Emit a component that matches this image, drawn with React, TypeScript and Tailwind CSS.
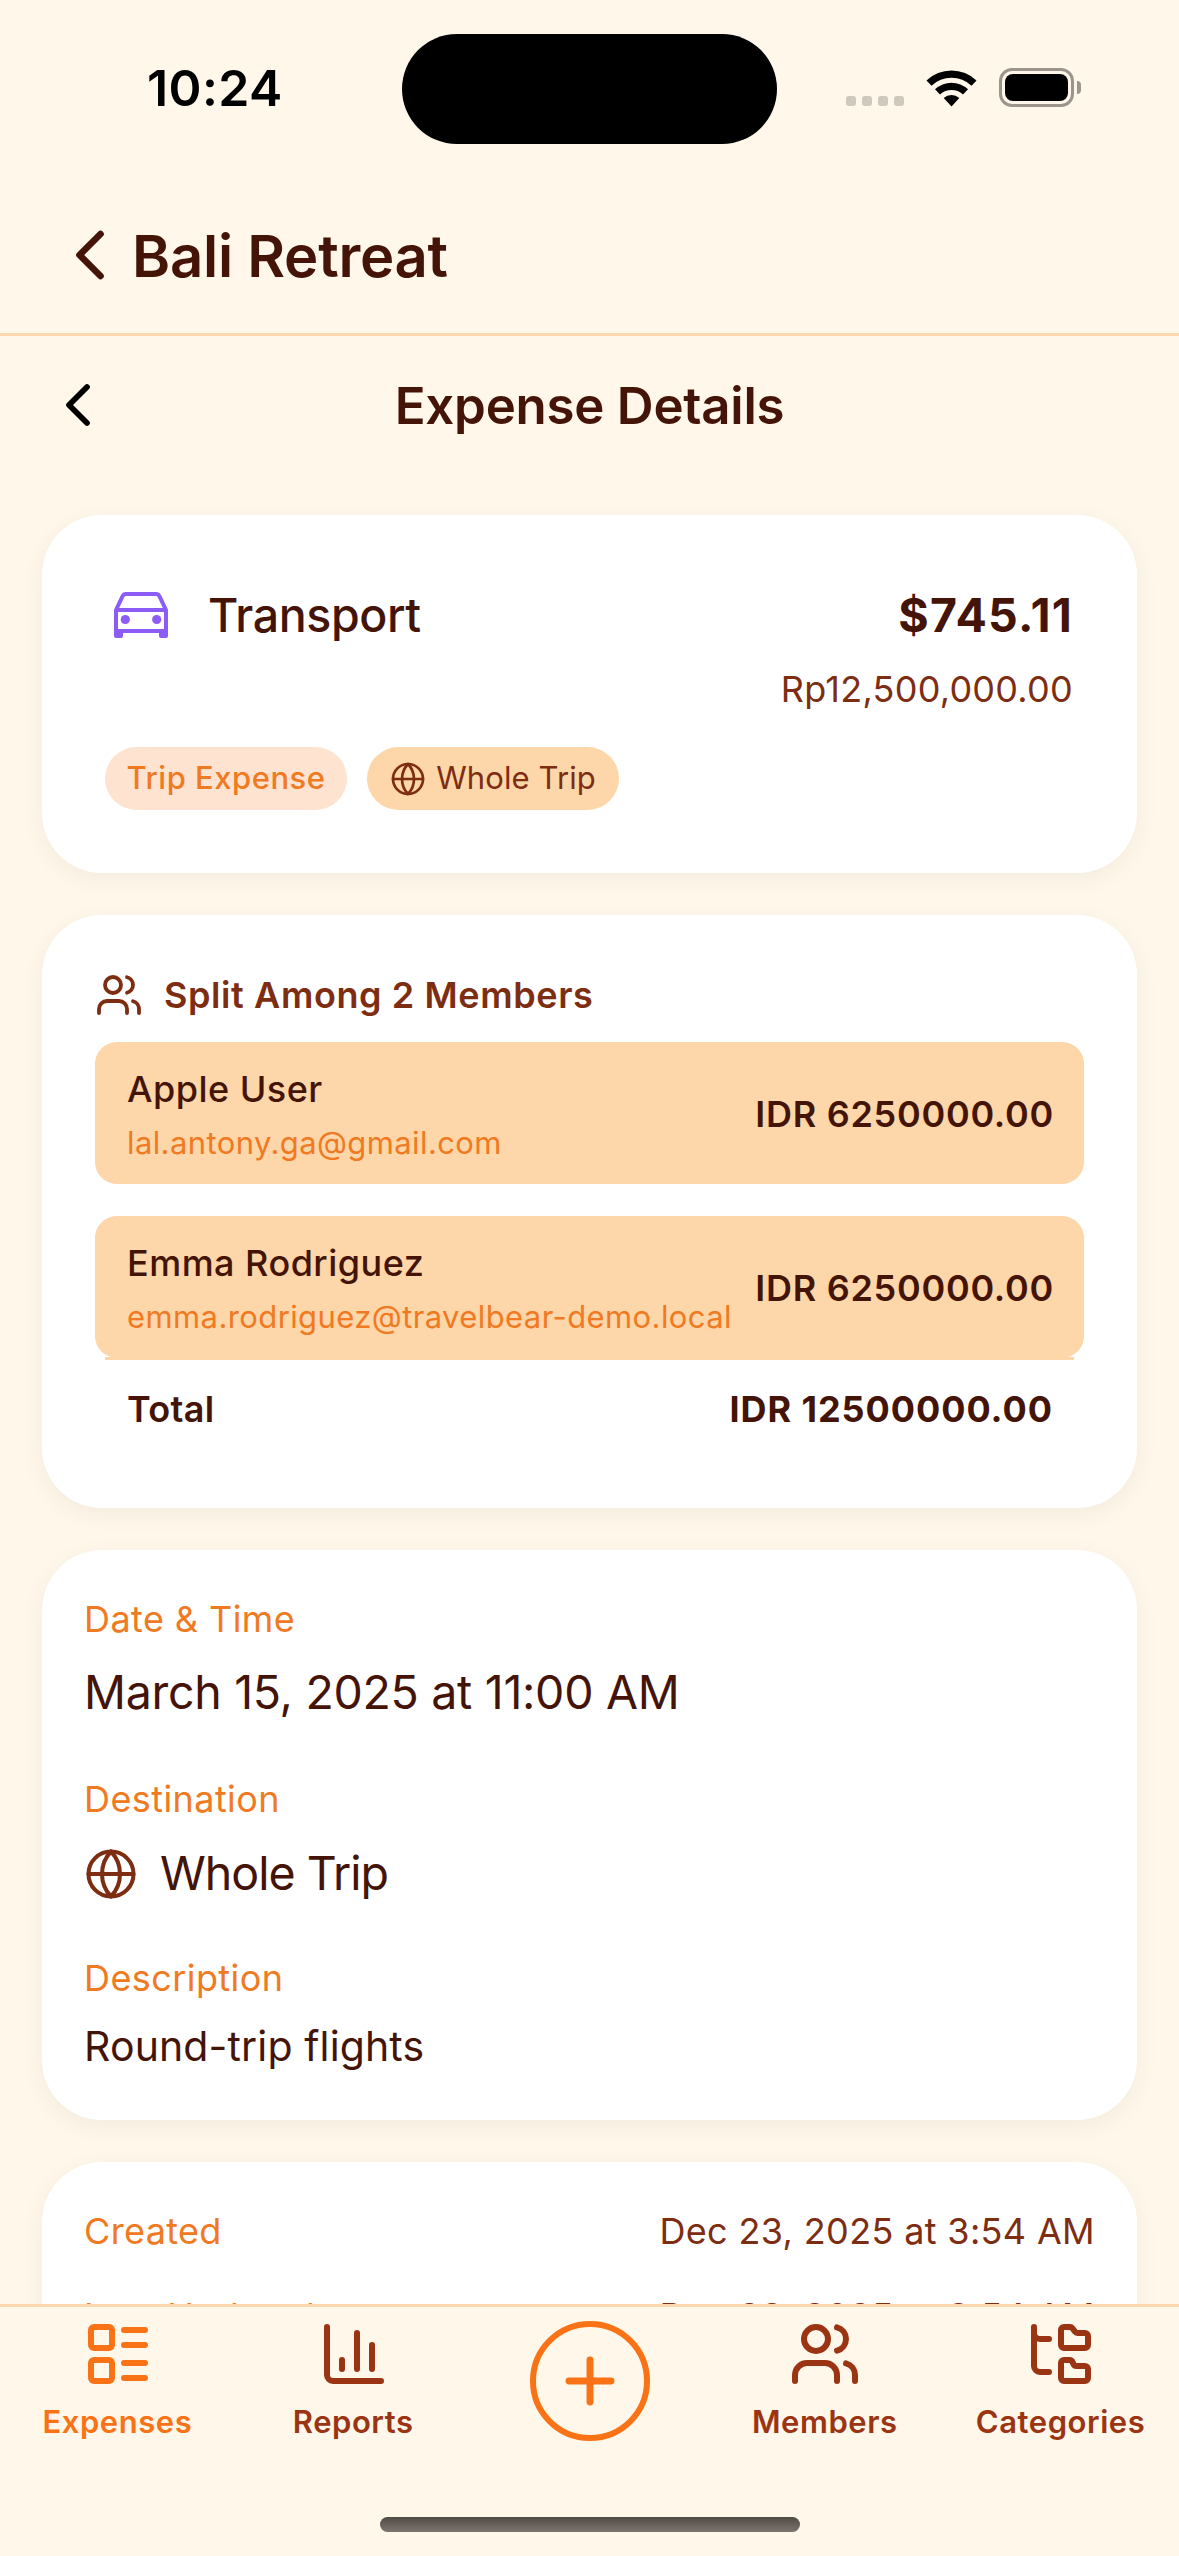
import type { ReactNode } from 'react'
import { ChevronLeft, ChartColumn, FolderTree, Globe, LayoutList, Plus, Users } from 'lucide-react'
import type { LucideIcon } from 'lucide-react'
import clsx from 'clsx'

const members = [
  { name: 'Apple User', email: 'lal.antony.ga@gmail.com', share: 'IDR 6250000.00' },
  { name: 'Emma Rodriguez', email: 'emma.rodriguez@travelbear-demo.local', share: 'IDR 6250000.00' },
]

const history = [
  { label: 'Created', value: 'Dec 23, 2025 at 3:54 AM' },
  { label: 'Last Updated', value: 'Dec 23, 2025 at 3:54 AM' },
]

export default function App() {
  return (
    <div className="w-[1179px] h-[2556px] flex flex-col overflow-hidden bg-[#fef7ea] text-[#431407] font-['Inter',sans-serif]">
      <StatusBar />

      <header className="h-[159px] shrink-0 flex items-center pl-[48px] border-b-3 border-[#fad7ad]">
        <ChevronLeft size={84} strokeWidth={1.9} />
        <h1 className="pt-[2px] text-[58px] font-semibold tracking-[-0.25px]">Bali Retreat</h1>
      </header>

      <div className="h-[138px] shrink-0 grid grid-cols-[1fr_auto_1fr] items-center px-[42px]">
        <ChevronLeft size={72} strokeWidth={1.9} className="text-black" />
        <h2 className="pt-[2px] text-[51px] font-semibold tracking-[-0.25px]">Expense Details</h2>
      </div>

      <main className="flex-1 min-h-0 overflow-hidden flex flex-col gap-[42px] px-[42px] pt-[41px]">
        {/* Summary */}
        <Card className="h-[358px] px-[63px] pt-[70px]">
          <div className="h-[60px] flex items-center text-[46.5px]">
            <CarIcon />
            <span className="ml-[40px] pt-[2px] font-medium tracking-[-0.4px]">Transport</span>
            <span className="ml-auto mr-px pt-[2px] font-bold tracking-[1.2px]">$745.11</span>
          </div>
          <p className="mt-[20px] pr-px text-right text-[36px] leading-[48px] tracking-[0.25px] text-[#7c2d12]">Rp12,500,000.00</p>
          <div className="mt-[34px] flex gap-[20px] text-[31px]">
            <span className="w-[242px] h-[63px] rounded-full bg-[#fee3d0] text-[#f07a22] font-medium tracking-[0.5px] flex items-center justify-center">
              Trip Expense
            </span>
            <span className="w-[252px] h-[63px] rounded-full bg-[#fdd6a9] text-[#7c2d12] tracking-[0.1px] flex items-center justify-center gap-[10px]">
              <Globe size={36} strokeWidth={1.8} />
              Whole Trip
            </span>
          </div>
        </Card>

        {/* Split */}
        <Card className="h-[593px] px-[53px] pt-[56px]">
          <div className="h-[48px] flex items-center gap-[21px] text-[#7c2d12]">
            <Users size={48} strokeWidth={1.9} />
            <h3 className="text-[36px] leading-[48px] font-semibold tracking-[0.6px]">Split Among 2 Members</h3>
          </div>
          <div className="mt-[23px] flex flex-col gap-[32px]">
            {members.map(m => (
              <div key={m.email} className="h-[142px] rounded-[22px] bg-[#fdd6a9] pl-[32px] pr-[30px] pt-[2px] flex items-center justify-between whitespace-nowrap">
                <div>
                  <p className="text-[36px] leading-[48px] font-medium tracking-[0.48px]">{m.name}</p>
                  <p className="mt-[10px] text-[31px] leading-[40px] tracking-[0.4px] text-[#f07a22]">{m.email}</p>
                </div>
                <span className="text-[36px] leading-[48px] font-semibold tracking-[0.72px]">{m.share}</span>
              </div>
            ))}
          </div>
          <div className="-mt-px mx-[10px] border-t-3 border-[#fdd6a9] pl-[22px] pr-[21px] pt-[25px] flex justify-between text-[36px] leading-[48px]">
            <span className="font-semibold tracking-[0.3px]">Total</span>
            <span className="font-bold tracking-[0.95px]">IDR 12500000.00</span>
          </div>
        </Card>

        {/* Details */}
        <Card className="h-[570px] px-[42px] pt-[45px]">
          <FieldLabel>Date &amp; Time</FieldLabel>
          <p className="mt-[19px] text-[46.5px] leading-[60px] tracking-[-0.3px]">March 15, 2025 at 11:00 AM</p>
          <FieldLabel className="mt-[53px]">Destination</FieldLabel>
          <div className="mt-[21px] h-[60px] flex items-center gap-[22px] text-[46.5px] tracking-[-1px]">
            <Globe size={54} strokeWidth={1.8} className="text-[#7c2d12]" />
            Whole Trip
          </div>
          <FieldLabel className="mt-[50px]">Description</FieldLabel>
          <p className="mt-[17px] text-[41px] leading-[54px] tracking-[0.13px]">Round-trip flights</p>
        </Card>

        {/* History, cut off by the tab bar */}
        <Card className="h-[260px] px-[42px] pt-[45px] flex flex-col gap-[37px]">
          {history.map(h => (
            <div key={h.label} className="flex justify-between text-[36px] leading-[48px] tracking-[0.35px]">
              <span className="text-[#f07a22]">{h.label}</span>
              <span className="text-[#7c2d12]">{h.value}</span>
            </div>
          ))}
        </Card>
      </main>

      <TabBar />
    </div>
  )
}

function StatusBar() {
  return (
    <div className="h-[177px] shrink-0 grid grid-cols-[402px_375px_1fr] items-center text-black">
      <span className="pl-[147px] text-[50px] font-semibold tracking-[0.4px]">10:24</span>
      <div className="h-[110px] rounded-full bg-black" />
      <div className="flex items-center pl-[69px] pb-[2px]">
        <div className="flex gap-[6px] pt-[26px]">
          {[0, 1, 2, 3].map(i => (
            <span key={i} className="size-[10px] rounded-[3px] bg-[#cec8bd]" />
          ))}
        </div>
        <svg width="51" height="38" viewBox="0 0 51 38" className="ml-[22px]">
          <path d="M0.5 11.5a36 36 0 0 1 50 0l-5 5.2a29 29 0 0 0-40 0z" />
          <path d="M9 20.3a24 24 0 0 1 33 0l-5 5.2a17 17 0 0 0-23 0z" />
          <path d="M17.7 29a11.5 11.5 0 0 1 15.6 0l-7.8 8.5z" />
        </svg>
        <div className="ml-[22px] w-[75px] h-[39px] rounded-[13px] border-3 border-[#9c958d] p-[3px]">
          <div className="size-full rounded-[8px] bg-black" />
        </div>
        <div className="ml-[3px] w-[4px] h-[13px] rounded-r-full bg-[#9c958d]" />
      </div>
    </div>
  )
}

function Card({ className, children }: { className?: string; children: ReactNode }) {
  return (
    <section className={clsx('shrink-0 rounded-[60px] bg-white shadow-[0_6px_24px_rgba(0,0,0,0.05)]', className)}>
      {children}
    </section>
  )
}

function FieldLabel({ className, children }: { className?: string; children: ReactNode }) {
  return <p className={clsx('text-[36px] leading-[48px] tracking-[0.42px] text-[#f07a22]', className)}>{children}</p>
}

function CarIcon() {
  return (
    <svg width="54" height="46" viewBox="0 0 54 46" fill="none" className="ml-[9px] text-[#8b5cf6]">
      <path d="M2 18L8.6 4.2Q9.6 2 12 2h30q2.400 0 3.400 2.200L52 18v21H2z" stroke="currentColor" strokeWidth="4" strokeLinejoin="round" />
      <path d="M2 18h50" stroke="currentColor" strokeWidth="4" />
      <path d="M0 37h54v7q0 2-2 2h-5q-2 0-2-2v-3H9v3q0 2-2 2H2q-2 0-2-2z" fill="currentColor" />
      <circle cx="11.300" cy="27.500" r="4.600" fill="currentColor" />
      <circle cx="42.700" cy="27.500" r="4.600" fill="currentColor" />
    </svg>
  )
}

function TabBar() {
  return (
    <nav className="h-[252px] shrink-0 border-t-3 border-[#fad7ad] bg-[#fef7ea]">
      <div className="h-[135px] grid grid-cols-5 justify-items-center pt-[11px]">
        <Tab icon={LayoutList} label="Expenses" active />
        <Tab icon={ChartColumn} label="Reports" />
        <button className="ml-px mt-[3px] size-[120px] rounded-full border-6 border-[#f97316] text-[#f97316] flex items-center justify-center">
          <Plus size={72} strokeWidth={2.3} />
        </button>
        <Tab icon={Users} label="Members" />
        <Tab icon={FolderTree} label="Categories" />
      </div>
      <div className="mt-[75px] mx-auto w-[420px] h-[15px] rounded-full bg-linear-to-b from-[#514b45] to-[#7d756f]" />
    </nav>
  )
}

function Tab({ icon: Icon, label, active }: { icon: LucideIcon; label: string; active?: boolean }) {
  return (
    <button className={clsx('flex flex-col items-center', active ? 'text-[#f97316]' : 'text-[#9a3412]')}>
      <Icon size={72} strokeWidth={2} />
      <span className="mt-[12px] pr-px text-[31px] leading-[40px] font-semibold tracking-[0.55px]">{label}</span>
    </button>
  )
}
